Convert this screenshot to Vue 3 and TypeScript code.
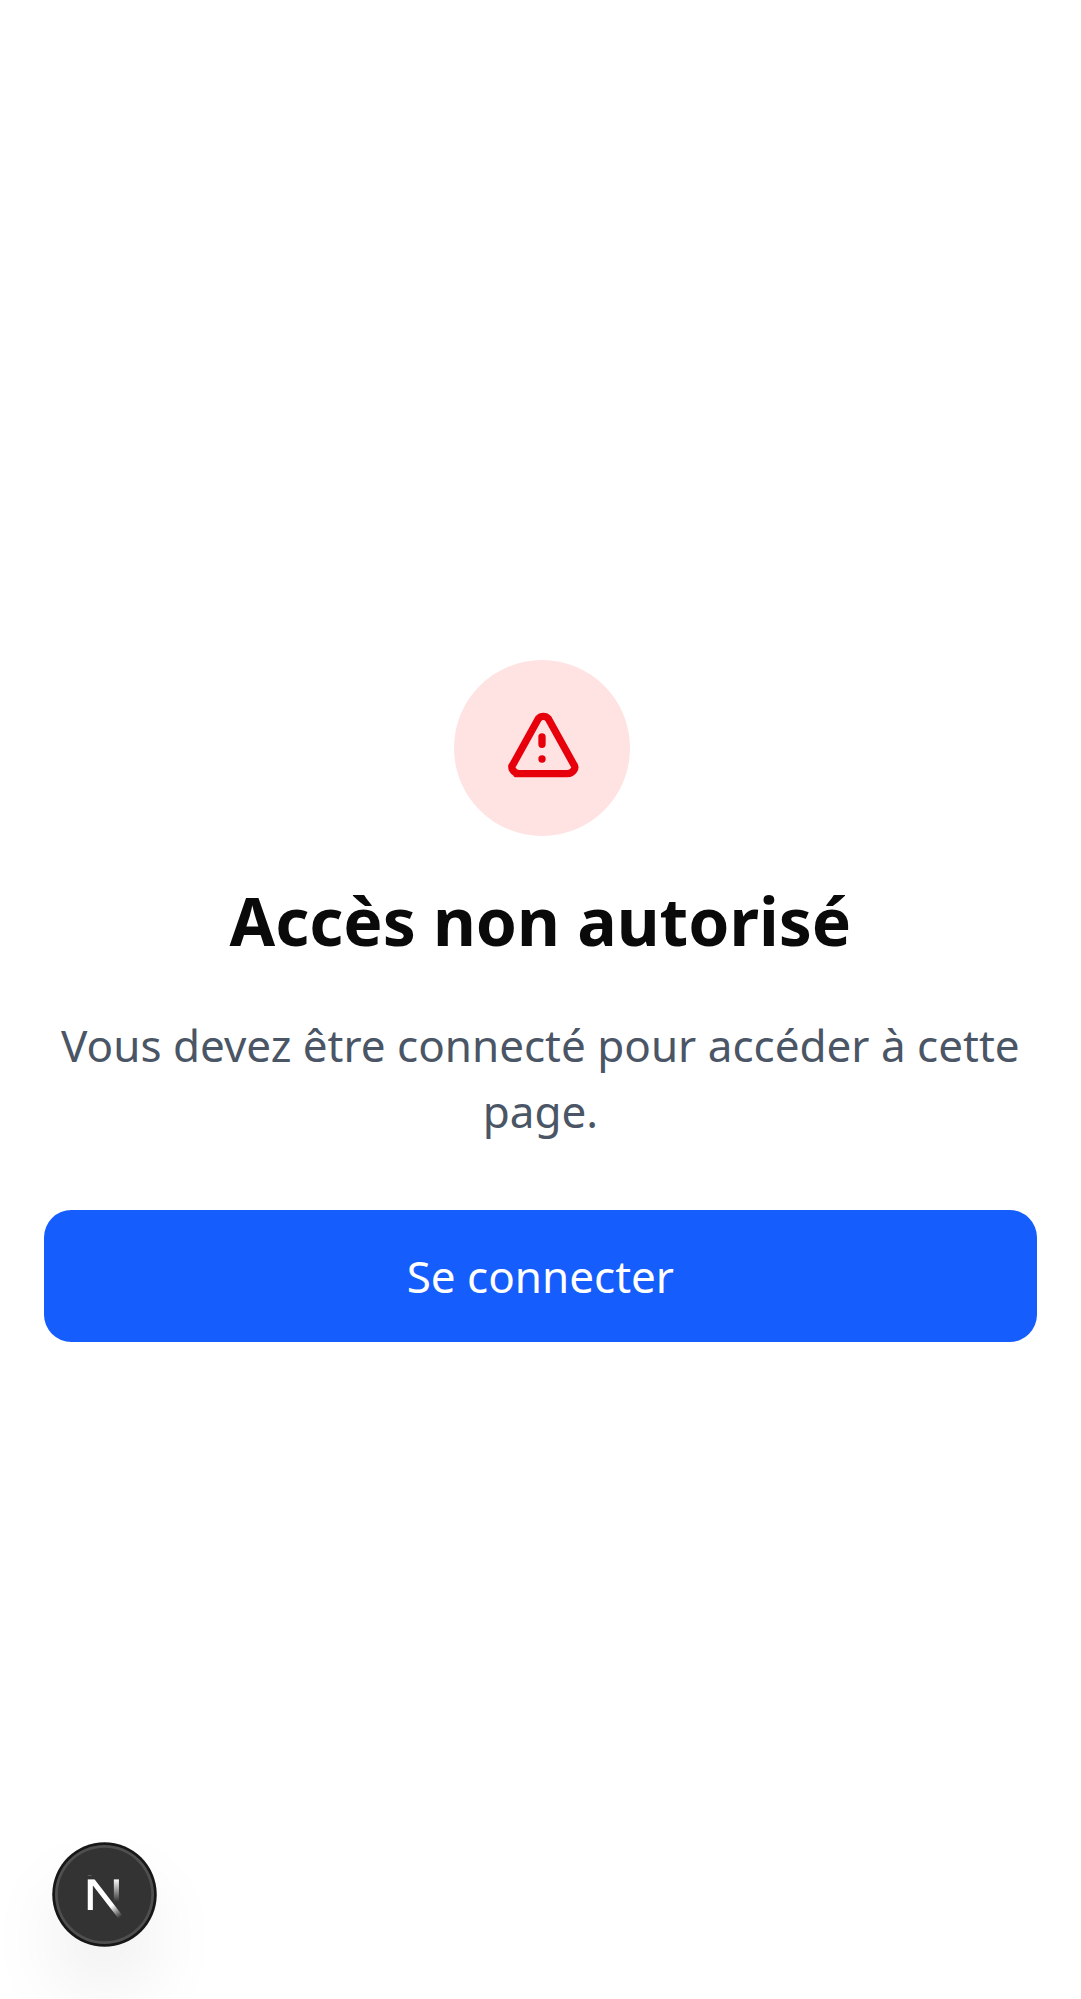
<script setup lang="ts">
const title: string = 'Accès non autorisé'
const message: string = 'Vous devez être connecté pour accéder à cette page.'
const action: string = 'Se connecter'
</script>

<template>
  <main class="screen">
    <section class="notice">
      <div class="badge">
        <svg class="badge-icon" viewBox="0 0 24 24" fill="none" stroke="currentColor" aria-hidden="true">
          <path
            stroke-linecap="round"
            stroke-linejoin="round"
            stroke-width="2"
            d="M12 9v2m0 4h.01m-6.938 4h13.856c1.54 0 2.502-1.667 1.732-2.5L13.732 4c-.77-.833-1.964-.833-2.732 0L4.082 16.5c-.77.833.192 2.5 1.732 2.5z"
          />
        </svg>
      </div>
      <h1 class="title">{{ title }}</h1>
      <p class="message">{{ message }}</p>
      <button class="action" type="button">{{ action }}</button>
    </section>

    <button class="dev-indicator" type="button" aria-label="Next.js">
      <svg viewBox="0 0 36 36" fill="none" aria-hidden="true">
        <g transform="translate(10.5, 11)">
          <path
            d="M13.3 15.2 L2.34 1 V12.6"
            stroke="url(#stroke-main)"
            stroke-width="1.86"
            mask="url(#top-mask)"
          />
          <path d="M11.825 1.5 V13.1" stroke="url(#stroke-side)" stroke-width="1.86" />
        </g>
        <defs>
          <linearGradient id="stroke-main" x1="9.95555" y1="11.1226" x2="15.4778" y2="17.9671" gradientUnits="userSpaceOnUse">
            <stop stop-color="white" />
            <stop offset="0.604072" stop-color="white" stop-opacity="0" />
            <stop offset="1" stop-color="white" stop-opacity="0" />
          </linearGradient>
          <linearGradient id="stroke-side" x1="11.8222" y1="1.40039" x2="11.791" y2="9.62542" gradientUnits="userSpaceOnUse">
            <stop stop-color="white" />
            <stop offset="1" stop-color="white" stop-opacity="0" />
          </linearGradient>
          <mask id="top-mask">
            <rect width="100%" height="100%" fill="white" />
            <rect width="5" height="1.5" fill="black" />
          </mask>
        </defs>
      </svg>
    </button>
  </main>
</template>

<style>
body {
  background: #ffffff;
}
</style>

<style scoped>
.screen {
  box-sizing: border-box;
  height: 100vh;
  padding: 3px 44.3px 0 44px;
  display: flex;
  align-items: center;
  justify-content: center;
  overflow: hidden;
  font-family: "Noto Sans", sans-serif;
}

.notice {
  width: 100%;
  display: flex;
  flex-direction: column;
  text-align: center;
}

.badge {
  align-self: center;
  width: 176px;
  height: 176px;
  margin: 0 0 44px 3px;
  border-radius: 50%;
  background: #ffe2e2;
  display: flex;
  align-items: center;
  justify-content: center;
}

.badge-icon {
  width: 88px;
  height: 88px;
  color: #e7000b;
}

.title {
  margin: 0 0 52px;
  font-size: 66px;
  line-height: 80px;
  font-weight: 700;
  color: #0a0a0a;
}

.message {
  margin: 0 0 66px;
  font-size: 44px;
  line-height: 66px;
  color: #4a5565;
}

.action {
  height: 132px;
  padding: 0 44px;
  border: 0;
  border-radius: 27.5px;
  background: #155dfc;
  color: #ffffff;
  font-family: inherit;
  font-size: 44px;
  line-height: 66px;
}

.dev-indicator {
  position: fixed;
  left: 55px;
  bottom: 55px;
  width: 99px;
  height: 99px;
  padding: 0;
  border: 0;
  border-radius: 50%;
  background: #333333;
  box-shadow:
    0 0 0 2.75px #171717,
    inset 0 0 0 2.75px rgba(255, 255, 255, 0.14),
    0 44px 88px -22px rgba(0, 0, 0, 0.24);
}

.dev-indicator svg {
  display: block;
  width: 99px;
  height: 99px;
}
</style>
